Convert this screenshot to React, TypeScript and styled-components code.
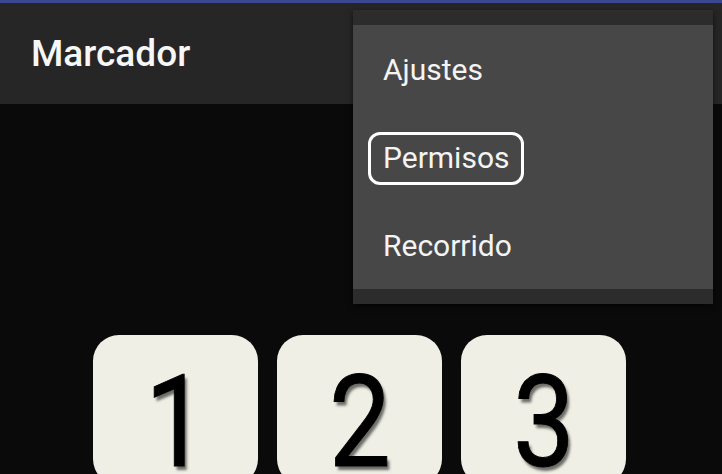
import React from "react";
import styled, { createGlobalStyle } from "styled-components";

const Global = createGlobalStyle`
  html, body { margin: 0; padding: 0; background: #0a0a0a; }
  body { width: 722px; height: 474px; overflow: hidden; font-family: Roboto, "Noto Sans", sans-serif; }
`;

const Screen = styled.div`
  position: relative;
  width: 722px;
  height: 474px;
  background: #0a0a0a;
  overflow: hidden;
`;

const StatusLine = styled.div`
  height: 3px;
  background: #3a4894;
`;

const Toolbar = styled.header`
  height: 101px;
  background: #262626;
  display: flex;
  align-items: center;
  padding-left: 31px;
`;

const Title = styled.h1`
  margin: 0;
  font-family: Roboto, sans-serif;
  font-weight: 500;
  font-size: 37px;
  color: #f7f7f7;
`;

const Content = styled.main`
  display: flex;
  justify-content: center;
  gap: 19px;
  padding-top: 231px;
  padding-right: 3px;
`;

const Key = styled.div`
  width: 165px;
  height: 150px;
  flex: none;
  box-sizing: border-box;
  background: #efefe5;
  border-radius: 26px;
  display: flex;
  justify-content: center;
  align-items: flex-start;
  padding-top: 37px;
`;

const Digit = styled.span`
  display: block;
  font-family: Roboto, sans-serif;
  font-weight: 400;
  font-size: 128px;
  line-height: 100px;
  height: 100px;
  color: #000;
  -webkit-text-stroke: 1px #000;
  text-shadow: 3px 4px 3px rgba(0, 0, 0, 0.55);
  transform: scaleX(0.86);
`;

const Menu = styled.nav`
  position: absolute;
  left: 353px;
  top: 10px;
  width: 360px;
  background: #484748;
  box-shadow: 0 2px 6px rgba(0, 0, 0, 0.6);
  display: flex;
  flex-direction: column;
`;

const Strip = styled.div`
  height: 15px;
  background: #2c2c2c;
`;

const Item = styled.div`
  position: relative;
  height: 88px;
  display: flex;
  align-items: center;
  padding-left: 30px;
  font-family: Roboto, sans-serif;
  font-size: 30px;
  color: #f4f4f4;
`;

const Highlight = styled.span`
  position: absolute;
  left: 15px;
  top: 19px;
  width: 156px;
  height: 53px;
  box-sizing: border-box;
  border: 3px solid #ffffff;
  border-radius: 12px;
  pointer-events: none;
`;

export default function App() {
  return (
    <>
      <Global />
      <Screen>
        <StatusLine />
        <Toolbar>
          <Title>Marcador</Title>
        </Toolbar>
        <Content>
          {["1", "2", "3"].map((d) => (
            <Key key={d}>
              <Digit>{d}</Digit>
            </Key>
          ))}
        </Content>
        <Menu>
          <Strip />
          <Item>Ajustes</Item>
          <Item>
            Permisos
            <Highlight />
          </Item>
          <Item>Recorrido</Item>
          <Strip />
        </Menu>
      </Screen>
    </>
  );
}
